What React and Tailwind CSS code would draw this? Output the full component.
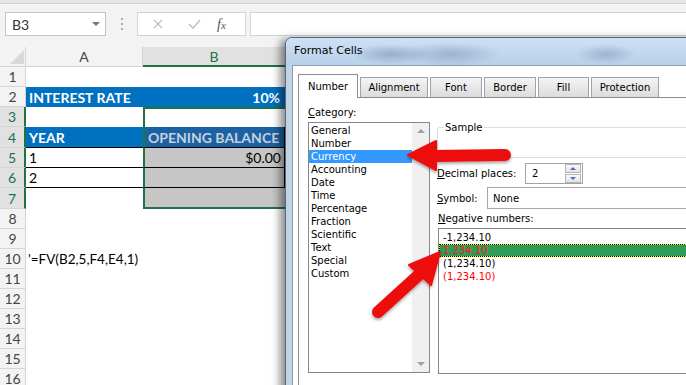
import React from "react";

const XL = "font-['Lato','Liberation_Sans',sans-serif]";
const DLG = "font-['DejaVu_Sans','Noto_Sans',sans-serif]";

function RowHead({ n, sel }) {
  return (
    <div
      className={
        "w-[26px] shrink-0 flex items-center justify-center border-b border-[#d4d4d4] text-[14px] " +
        (sel
          ? "bg-[#e1e1e1] text-[#217346] border-r-2 border-r-[#217346]"
          : "bg-[#f3f3f3] text-[#444] border-r border-r-[#d4d4d4]")
      }
    >
      {n}
    </div>
  );
}

function Row({ n, h, sel, a, b }) {
  return (
    <div className="flex" style={{ height: h }}>
      <RowHead n={n} sel={sel} />
      <div className={"w-[117px] shrink-0 flex items-center whitespace-nowrap " + (a?.cls || "")}>
        {a?.text}
      </div>
      <div className={"w-[142px] shrink-0 flex items-center whitespace-nowrap " + (b?.cls || "")}>
        {b?.text}
      </div>
      <div className="flex-1" />
    </div>
  );
}

function Toolbar() {
  return (
    <>
      <div className="h-[4px] bg-[#e6e6e6] border-b border-[#d2d2d2]" />
      <div className="h-[43px] bg-[#f3f3f3] flex items-start pt-[8px] pl-[5px]">
        <div className="w-[101px] h-[24px] bg-white border border-[#c6c6c6] flex items-center pl-[6px] pr-[5px] text-[14px] text-[#333]">
          <span className="flex-1">B3</span>
          <span className="w-0 h-0 border-l-[4px] border-r-[4px] border-t-[4px] border-l-transparent border-r-transparent border-t-[#777]" />
        </div>
        <div className="w-[31px] h-[24px] flex flex-col items-center justify-center gap-[3px]">
          <span className="w-[2px] h-[2px] bg-[#a9a9a9]" />
          <span className="w-[2px] h-[2px] bg-[#a9a9a9]" />
          <span className="w-[2px] h-[2px] bg-[#a9a9a9]" />
        </div>
        <div className="w-[109px] h-[24px] bg-white border border-[#d4d4d4] flex items-center">
          <svg width="36" height="22" viewBox="0 0 36 22" className="ml-[2px]">
            <path d="M14 7 L22 15 M22 7 L14 15" stroke="#c2c2c2" strokeWidth="1.4" />
          </svg>
          <svg width="36" height="22" viewBox="0 0 36 22">
            <path d="M13 11 L17 15 L24 7" stroke="#c2c2c2" strokeWidth="1.6" fill="none" />
          </svg>
          <span className="ml-[5px] font-['Liberation_Serif',serif] italic text-[14px] text-[#555]">
            f<span className="text-[11px]">x</span>
          </span>
        </div>
        <div className="ml-[4px] flex-1 h-[24px] bg-white border border-[#d4d4d4] border-r-0" />
      </div>
    </>
  );
}

function Sheet() {
  const blue = "bg-[#0070c0] text-white font-bold text-[14px]";
  const grayB = "bg-[#c6c6c6] border-l-2 border-l-[#217346]";
  return (
    <div className={XL}>
      <div className="flex h-[20px]">
        <div className="w-[26px] shrink-0 bg-[#f3f3f3] border-r border-b border-[#d4d4d4] flex items-end justify-end pr-[1px] pb-[2px]">
          <svg width="16" height="14" viewBox="0 0 16 14">
            <polygon points="16,0 16,14 2,14" fill="#d9d9d9" />
          </svg>
        </div>
        <div className="w-[117px] shrink-0 bg-[#f3f3f3] border-r border-b border-[#d4d4d4] flex items-center justify-center text-[14px] text-[#444]">
          A
        </div>
        <div className="w-[142px] shrink-0 bg-[#e1e1e1] border-b-2 border-b-[#217346] flex items-center justify-center text-[14px] text-[#217346]">
          B
        </div>
        <div className="flex-1 bg-[#f3f3f3] border-b border-[#d4d4d4]" />
      </div>
      <Row n={1} h={20} />
      <Row
        n={2}
        h={20}
        a={{ text: "INTEREST RATE", cls: blue + " pl-[3px]" }}
        b={{ text: "10%", cls: blue + " justify-end pr-[5px]" }}
      />
      <Row n={3} h={20} sel b={{ cls: "border-l-2 border-t-2 border-[#217346] bg-white" }} />
      <Row
        n={4}
        h={21}
        sel
        a={{ text: "YEAR", cls: blue + " pl-[3px] border-b border-black" }}
        b={{
          text: "OPENING BALANCE",
          cls: "bg-[#1b62a5] text-[#c7d1dc] font-bold text-[14px] pl-[3px] border-b border-black border-l-2 border-l-[#217346] border-r border-r-black",
        }}
      />
      <Row
        n={5}
        h={20}
        sel
        a={{ text: "1", cls: "text-[14px] text-black pl-[3px] border-b border-black" }}
        b={{ text: "$0.00", cls: grayB + " text-[14px] text-black justify-end pr-[3px] border-b border-b-black border-r border-r-black" }}
      />
      <Row
        n={6}
        h={20}
        sel
        a={{ text: "2", cls: "text-[14px] text-black pl-[3px] border-b border-black" }}
        b={{ cls: grayB + " border-b border-b-black border-r border-r-black" }}
      />
      <Row n={7} h={21} sel b={{ cls: grayB + " border-b-2 border-b-[#217346]" }} />
      <Row n={8} h={20} />
      <Row n={9} h={20} />
      <Row n={10} h={20} a={{ text: "'=FV(B2,5,F4,E4,1)", cls: "text-[13.5px] text-black pl-[2px] overflow-visible" }} />
      <Row n={11} h={20} />
      <Row n={12} h={20} />
      <Row n={13} h={20} />
      <Row n={14} h={20} />
      <Row n={15} h={20} />
      <Row n={16} h={20} />
    </div>
  );
}

const tabs = [
  { label: "Alignment", w: 68 },
  { label: "Font", w: 52 },
  { label: "Border", w: 52 },
  { label: "Fill", w: 51 },
  { label: "Protection", w: 68 },
];

const categories = [
  "General",
  "Number",
  "Currency",
  "Accounting",
  "Date",
  "Time",
  "Percentage",
  "Fraction",
  "Scientific",
  "Text",
  "Special",
  "Custom",
];

function FormatCells() {
  return (
    <div
      className={
        DLG +
        " absolute left-[285px] top-[37px] w-[430px] h-[360px] rounded-tl-[7px] border border-[#55667a] bg-[#c2d3e6] shadow-[-5px_2px_9px_rgba(0,0,0,0.45)] flex flex-col text-[10px] text-black"
      }
    >
      <div className="h-[27px] shrink-0 rounded-tl-[6px] flex items-center pl-[8px] text-[11px] text-black bg-[radial-gradient(ellipse_40px_10px_at_105px_16px,rgba(70,100,135,0.35),transparent),radial-gradient(ellipse_50px_12px_at_165px_16px,rgba(70,100,135,0.3),transparent),radial-gradient(ellipse_30px_10px_at_320px_16px,rgba(70,100,135,0.3),transparent),linear-gradient(180deg,#cfe0f3,#b9d0ea)]">
        Format Cells
      </div>
      <div className="flex-1 ml-[6px] border border-[#8a9bb0] bg-white flex flex-col pt-[7px] pl-[5px]">
        <div className="flex items-end h-[24px] shrink-0">
          <div className="relative z-10 w-[60px] h-[24px] -mb-px bg-white border border-b-0 border-[#898c95] flex items-center justify-center">
            Number
          </div>
          {tabs.map((t) => (
            <div
              key={t.label}
              className="ml-[2px] h-[20px] border border-b-0 border-[#a0a3aa] bg-[linear-gradient(180deg,#f4f4f4,#dcdcdc)] flex items-center justify-center"
              style={{ width: t.w }}
            >
              {t.label}
            </div>
          ))}
        </div>
        <div className="flex-1 border-l border-t border-[#898c95] bg-white flex pl-[9px] pt-[8px]">
          <div className="w-[122px] shrink-0 flex flex-col">
            <div className="h-[13px] leading-[13px]">
              <span className="underline">C</span>ategory:
            </div>
            <div className="mt-[3px] h-[251px] border border-[#828790] flex">
              <div className="flex-1 pt-px">
                {categories.map((c) => (
                  <div
                    key={c}
                    className={
                      "h-[13px] leading-[13px] pl-[2px] " +
                      (c === "Currency" ? "bg-[#3399ff] text-white" : "")
                    }
                  >
                    {c}
                  </div>
                ))}
              </div>
              <div className="w-[17px] bg-[#f0f0f0] flex flex-col items-center justify-between py-[6px]">
                <span className="w-0 h-0 border-l-[4px] border-r-[4px] border-b-[4px] border-l-transparent border-r-transparent border-b-[#a0a0a0]" />
                <span className="w-0 h-0 border-l-[4px] border-r-[4px] border-t-[4px] border-l-transparent border-r-transparent border-t-[#a0a0a0]" />
              </div>
            </div>
          </div>
          <div className="flex-1 ml-[7px] flex flex-col">
            <fieldset className="mt-[15px] h-[37px] border border-[#d5dfe5] rounded-[3px]">
              <legend className="ml-[6px] px-[1px] leading-[13px]">Sample</legend>
            </fieldset>
            <div className="mt-[5px] h-[21px] flex items-center">
              <div className="w-[88px]">
                <span className="underline">D</span>ecimal places:
              </div>
              <div className="w-[58px] h-[21px] border border-[#a3a3a3] flex items-center">
                <span className="flex-1 pl-[6px]">2</span>
                <div className="w-[16px] h-[19px] flex flex-col gap-px mr-px">
                  <div className="flex-1 border border-[#b4b4b4] bg-[linear-gradient(180deg,#fafafa,#e2e2e2)] flex items-center justify-center">
                    <span className="w-0 h-0 border-l-[3px] border-r-[3px] border-b-[3px] border-l-transparent border-r-transparent border-b-[#4a6fb5]" />
                  </div>
                  <div className="flex-1 border border-[#b4b4b4] bg-[linear-gradient(180deg,#fafafa,#e2e2e2)] flex items-center justify-center">
                    <span className="w-0 h-0 border-l-[3px] border-r-[3px] border-t-[3px] border-l-transparent border-r-transparent border-t-[#4a6fb5]" />
                  </div>
                </div>
              </div>
            </div>
            <div className="mt-[3px] h-[22px] flex items-center">
              <div className="w-[50px]">
                <span className="underline">S</span>ymbol:
              </div>
              <div className="flex-1 h-[22px] border border-[#a8a8a8] border-r-0 flex items-center pl-[5px]">
                None
              </div>
            </div>
            <div className="mt-[3px] h-[13px] leading-[13px] pl-px">
              <span className="underline">N</span>egative numbers:
            </div>
            <div className="mt-[3px] h-[146px] ml-px border border-[#828790] border-r-0 pt-[2px]">
              <div className="h-[13px] leading-[13px] pl-[4px]">-1,234.10</div>
              <div className="h-[13px] bg-[#ffff00]">
                <div className="h-[13px] leading-[11px] pl-[3px] border border-dotted border-black bg-clip-padding bg-[#2f9b58] text-[#ff1a1a]">
                  1,234.10
                </div>
              </div>
              <div className="h-[13px] leading-[13px] pl-[4px]">(1,234.10)</div>
              <div className="h-[13px] leading-[13px] pl-[4px] text-[#ff0000]">(1,234.10)</div>
            </div>
          </div>
        </div>
      </div>
    </div>
  );
}

function Arrows() {
  return (
    <svg className="absolute inset-0 pointer-events-none" width="686" height="385">
      <defs>
        <filter id="ash" x="-20%" y="-20%" width="140%" height="140%">
          <feDropShadow dx="0" dy="2" stdDeviation="1.5" floodColor="#000" floodOpacity="0.35" />
        </filter>
      </defs>
      <g fill="#ee1010" stroke="#ee1010" filter="url(#ash)" strokeLinejoin="round">
        <line x1="505" y1="155" x2="434" y2="156" strokeWidth="12" strokeLinecap="round" />
        <polygon points="408,155 436,141 436,170" strokeWidth="2" />
        <line x1="378" y1="312" x2="422" y2="272" strokeWidth="12" strokeLinecap="round" />
        <polygon points="440,252 409,265 431,285" strokeWidth="2" />
      </g>
    </svg>
  );
}

export default function App() {
  return (
    <div className="relative w-[686px] h-[385px] overflow-hidden bg-white">
      <div className={XL}>
        <Toolbar />
      </div>
      <Sheet />
      <FormatCells />
      <Arrows />
    </div>
  );
}
